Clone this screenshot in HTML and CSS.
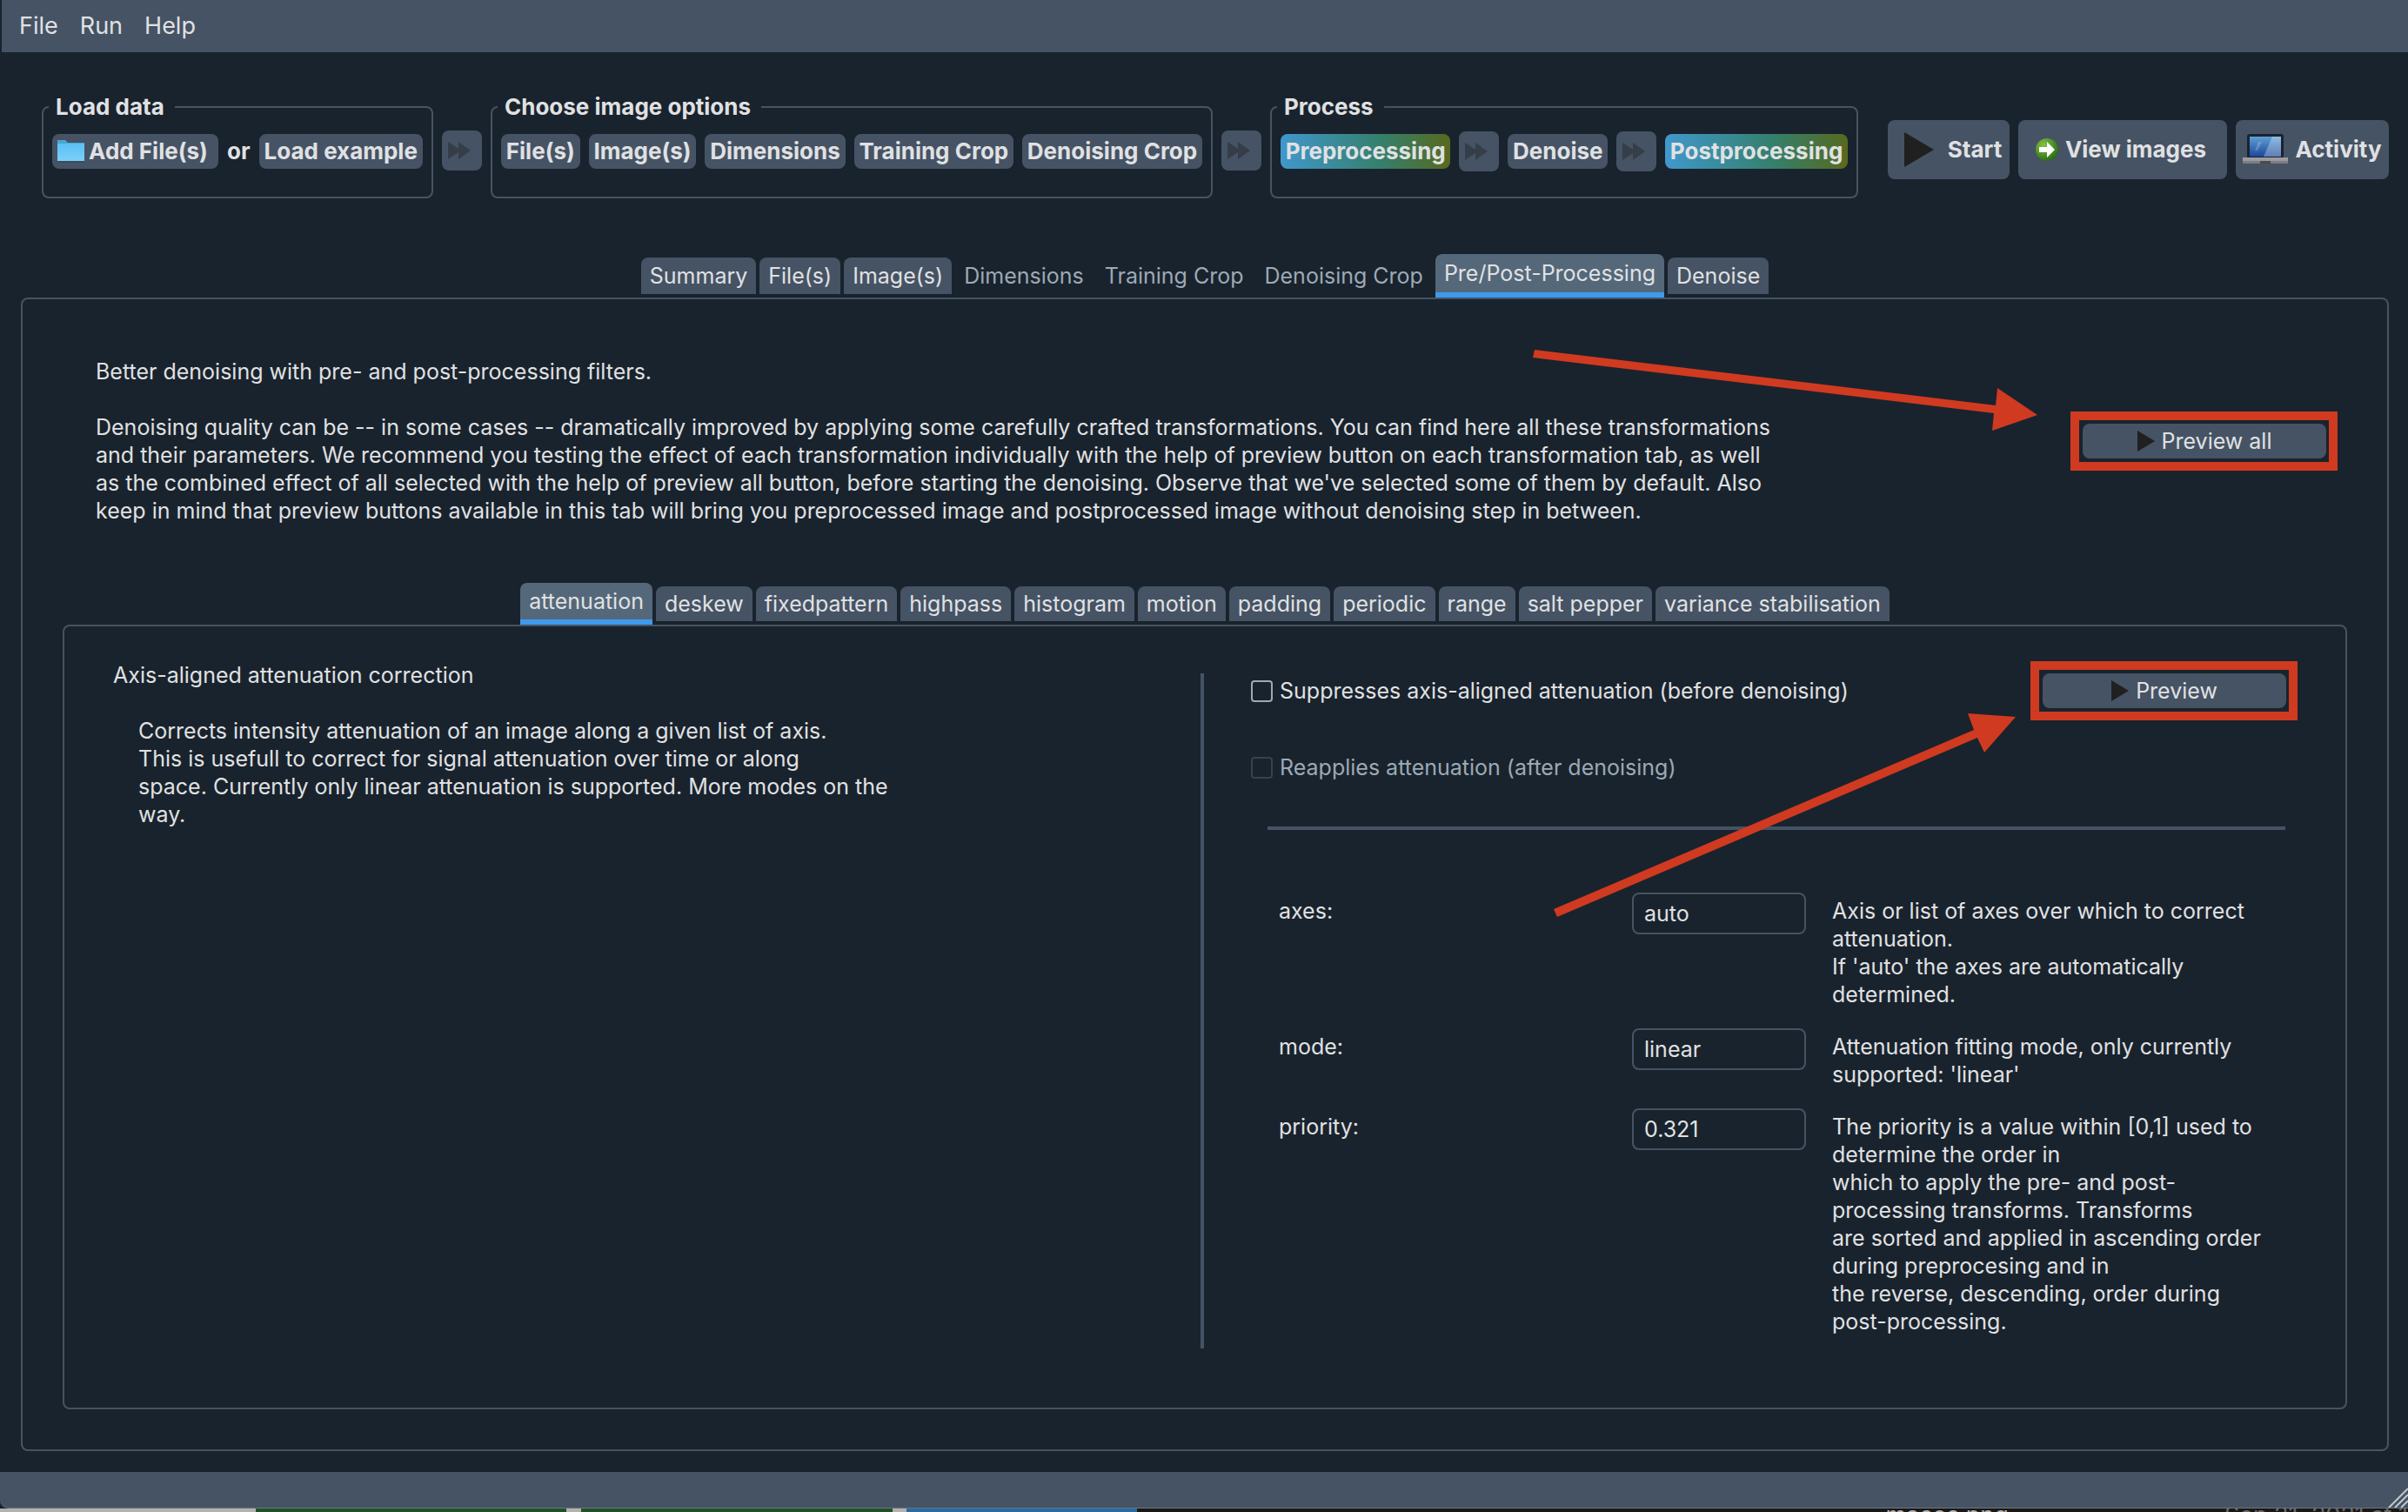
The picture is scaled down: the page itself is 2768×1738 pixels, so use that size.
FILE: index.html
```
<!DOCTYPE html>
<html lang="en">
<head>
<meta charset="utf-8">
<title>Image denoising</title>
<link rel="stylesheet" href="styles.css">
</head>
<body>
<svg class="defs" aria-hidden="true">
  <defs>
    <linearGradient id="folder" x1="0" y1="0" x2="0" y2="1"><stop offset="0" stop-color="#5bc0f5"/><stop offset="1" stop-color="#7ccff8"/></linearGradient>
    <linearGradient id="screen" x1="0" y1="0" x2="0" y2="1"><stop offset="0" stop-color="#5f9fd6"/><stop offset="1" stop-color="#1c4799"/></linearGradient>
    <radialGradient id="ball" cx=".35" cy=".3" r=".8"><stop offset="0" stop-color="#86c440"/><stop offset="1" stop-color="#1f6512"/></radialGradient>
    <symbol id="forward" viewBox="0 0 26 20"><path d="M0 0 12 8V0L26 10 12 20V12L0 20z" fill="#353d49"/></symbol>
    <symbol id="play" viewBox="0 0 20 24"><path d="M0 0 20 12 0 24z" fill="#202020"/></symbol>
  </defs>
</svg>
<nav class="menubar">
  <a href="#">File</a><a href="#">Run</a><a href="#">Help</a>
</nav>
<main class="window">
  <div class="toolbar">
    <fieldset class="group">
      <legend>Load data</legend>
      <div class="steps">
        <button class="step add"><svg class="folder-icon" viewBox="0 0 32 26"><path d="M0 0h9l3 3h19v20H0z" fill="#4aa5d2"/><path d="M0 4h31v20H0z" fill="url(#folder)"/><path d="M0 24h31v2H0z" fill="#3d4a5b"/></svg>Add File(s)</button>
        <span class="or">or</span>
        <button class="step">Load example</button>
      </div>
    </fieldset>
    <button class="forward" aria-label="Next"><svg><use href="#forward"/></svg></button>
    <fieldset class="group">
      <legend>Choose image options</legend>
      <div class="steps">
        <button class="step">File(s)</button>
        <button class="step">Image(s)</button>
        <button class="step">Dimensions</button>
        <button class="step">Training Crop</button>
        <button class="step">Denoising Crop</button>
      </div>
    </fieldset>
    <button class="forward" aria-label="Next"><svg><use href="#forward"/></svg></button>
    <fieldset class="group">
      <legend>Process</legend>
      <div class="steps">
        <button class="step active">Preprocessing</button>
        <button class="forward" aria-label="Next"><svg><use href="#forward"/></svg></button>
        <button class="step">Denoise</button>
        <button class="forward" aria-label="Next"><svg><use href="#forward"/></svg></button>
        <button class="step active">Postprocessing</button>
      </div>
    </fieldset>
    <div class="actions">
      <button class="action start"><svg class="start-icon" viewBox="0 0 34 40"><path d="M0 0 34 20 0 40z" fill="#202020"/></svg>Start</button>
      <button class="action view"><svg class="view-icon" viewBox="0 0 26 28"><circle cx="13" cy="14" r="13" fill="url(#ball)"/><path d="M4 11h9V5l9 9-9 9v-6H4z" fill="#fff"/></svg>View images</button>
      <button class="action activity"><svg class="laptop-icon" viewBox="0 0 52 36"><rect x="5" y="0" width="42" height="28" rx="3" fill="#1a2330"/><path d="M8 3h36v23H8z" fill="url(#screen)"/><path d="M34 3h10v23H24z" fill="#fff" opacity=".3"/><path d="M18 9h4L17 19h-3z" fill="#fff" opacity=".2"/><path d="M0 27h52v7H0z" fill="#9a9c9f"/><path d="M0 31h52v3H0z" fill="#7c7e80"/><path d="M20 31h12v3H20z" fill="#4b4b4b"/></svg>Activity</button>
    </div>
  </div>

  <div class="tabs" role="tablist">
    <button class="tab" role="tab">Summary</button>
    <button class="tab" role="tab">File(s)</button>
    <button class="tab" role="tab">Image(s)</button>
    <button class="tab" role="tab" disabled>Dimensions</button>
    <button class="tab" role="tab" disabled>Training Crop</button>
    <button class="tab" role="tab" disabled>Denoising Crop</button>
    <button class="tab selected" role="tab" aria-selected="true">Pre/Post-Processing</button>
    <button class="tab" role="tab">Denoise</button>
  </div>
  <section class="pane">
    <div class="intro">
      <div class="copy">
        <p>Better denoising with pre- and post-processing filters.</p>
        <p>Denoising quality can be -- in some cases -- dramatically improved by applying some carefully crafted transformations. You can find here all these transformations<br>and their parameters. We recommend you testing the effect of each transformation individually with the help of preview button on each transformation tab, as well<br>as the combined effect of all selected with the help of preview all button, before starting the denoising. Observe that we've selected some of them by default. Also<br>keep in mind that preview buttons available in this tab will bring you preprocessed image and postprocessed image without denoising step in between.</p>
      </div>
      <div class="highlight"><button class="preview"><svg><use href="#play"/></svg>Preview all</button></div>
    </div>

    <div class="tabs inner" role="tablist">
      <button class="tab selected" role="tab" aria-selected="true">attenuation</button>
      <button class="tab" role="tab">deskew</button>
      <button class="tab" role="tab">fixedpattern</button>
      <button class="tab" role="tab">highpass</button>
      <button class="tab" role="tab">histogram</button>
      <button class="tab" role="tab">motion</button>
      <button class="tab" role="tab">padding</button>
      <button class="tab" role="tab">periodic</button>
      <button class="tab" role="tab">range</button>
      <button class="tab" role="tab">salt pepper</button>
      <button class="tab" role="tab">variance stabilisation</button>
    </div>
    <div class="filter">
      <div class="about">
        <p>Axis-aligned attenuation correction</p>
        <p class="detail">Corrects intensity attenuation of an image along a given list of axis.<br>This is usefull to correct for signal attenuation over time or along<br>space. Currently only linear attenuation is supported. More modes on the<br>way.</p>
      </div>
      <div class="divider"></div>
      <div class="settings">
        <div class="switches">
          <div class="checks">
            <label class="check"><input type="checkbox">Suppresses axis-aligned attenuation (before denoising)</label>
            <label class="check off"><input type="checkbox" disabled>Reapplies attenuation (after denoising)</label>
          </div>
          <div class="highlight"><button class="preview"><svg><use href="#play"/></svg>Preview</button></div>
        </div>
        <hr>
        <div class="params">
          <label for="axes">axes:</label>
          <input id="axes" type="text" value="auto">
          <p>Axis or list of axes over which to correct<br>attenuation.<br>If 'auto' the axes are automatically<br>determined.</p>
          <label for="mode">mode:</label>
          <input id="mode" type="text" value="linear">
          <p>Attenuation fitting mode, only currently<br>supported: 'linear'</p>
          <label for="priority">priority:</label>
          <input id="priority" type="text" value="0.321">
          <p>The priority is a value within [0,1] used to<br>determine the order in<br>which to apply the pre- and post-<br>processing transforms. Transforms<br>are sorted and applied in ascending order<br>during preprocesing and in<br>the reverse, descending, order during<br>post-processing.</p>
        </div>
      </div>
    </div>
  </section>
</main>
<footer class="statusbar"><svg class="grip" viewBox="0 0 24 24"><path d="M2 24 24 2M9 24 24 9M16 24 24 16" stroke="#c3c8ce" stroke-width="2"/></svg></footer>
<div class="desktop"><span class="file">macos.png</span><span class="date">Sep 21, 2021 at 1</span></div>
<svg class="arrows" viewBox="0 0 2768 1738" aria-hidden="true">
  <g fill="#d03a20">
    <path d="M1764 402 2294 466 2296 446 2342 477 2290 495 2292 475 1762 411z"/>
    <path d="M1786 1045 2269 839 2262 820 2317 824 2281 865 2273 848 1790 1054z"/>
  </g>
</svg>
</body>
</html>
```
FILE: styles.css
```
* { box-sizing: border-box; }

body {
  margin: 0;
  min-height: 100vh;
  display: flex;
  flex-direction: column;
  position: relative;
  background: #19232d;
  color: #e0e1e3;
  font: 25px/32px Inter, "Liberation Sans", sans-serif;
}

p { margin: 0; }

button, input {
  font: inherit;
  color: inherit;
}

button {
  display: flex;
  align-items: center;
  justify-content: center;
  padding: 0;
  border: 0;
  border-radius: 8px;
  background: #455364;
  white-space: nowrap;
}

.defs {
  position: absolute;
  width: 0;
  height: 0;
}

.menubar {
  display: flex;
  align-items: center;
  gap: 25px;
  height: 60px;
  padding-left: 20px;
  background: #455364;
  border-left: 2px solid #19232d;
  font-size: 27px;
}

.menubar a {
  color: inherit;
  text-decoration: none;
}

.window {
  flex: 1;
  display: flex;
  flex-direction: column;
  padding: 47px 22px 24px 24px;
}

.toolbar {
  display: grid;
  grid-template-columns: 450fr 46px 830fr 46px 676fr 600fr;
  gap: 10px;
  margin-left: 24px;
  font-size: 26px;
  font-weight: 700;
}

.group {
  min-width: 0;
  height: 121px;
  margin: 0;
  padding: 0 10px;
  border: 2px solid #455364;
  border-radius: 8px;
}

.group legend {
  margin-left: -4px;
  padding: 0 12px 0 8px;
}

.steps {
  display: flex;
  align-items: center;
  gap: 10px;
  height: 56px;
  padding-top: 14px;
}

.step {
  flex: 1 0 auto;
  height: 40px;
}

.step.active {
  background: linear-gradient(90deg, #4098cc, #357f6b 60%, #57691f);
}

.step.add {
  gap: 4px;
  padding-right: 6px;
}

.folder-icon {
  width: 32px;
  height: 26px;
}

.forward {
  flex: none;
  width: 46px;
  height: 46px;
}

.toolbar > .forward { margin-top: 43px; }

.forward svg {
  width: 26px;
  height: 20px;
  margin-right: 6px;
}

.actions {
  display: grid;
  grid-template-columns: 140fr 240fr 176fr;
  gap: 10px;
  margin: 31px 0 0 24px;
  height: 68px;
}

.start { gap: 16px; padding-left: 10px; }
.view { gap: 8px; padding-right: 4px; }
.activity { gap: 8px; }

.start-icon { width: 34px; height: 40px; }
.view-icon { width: 26px; height: 28px; }
.laptop-icon { width: 52px; height: 36px; }

.tabs {
  display: flex;
  justify-content: center;
  align-items: flex-end;
  gap: 4px;
  height: 50px;
  margin-top: 64px;
}

.tab {
  height: 42px;
  margin-bottom: 4px;
  padding: 0 10px;
  border-radius: 8px 8px 0 0;
}

.tab:disabled {
  background: none;
  color: #9da9b5;
}

.tab.selected {
  height: 50px;
  margin-bottom: 0;
  background: #54687a;
  border-bottom: 6px solid #3f9aec;
}

.pane, .filter {
  border: 2px solid #455364;
  border-radius: 8px;
}

.pane {
  flex: 1;
  display: flex;
  flex-direction: column;
  padding: 67px 46px 46px;
}

.intro {
  display: flex;
  justify-content: space-between;
  align-items: center;
  padding: 0 11px 0 38px;
}

.copy {
  display: grid;
  gap: 32px;
  white-space: nowrap;
}

.highlight {
  flex: none;
  width: 307px;
  height: 68px;
  padding: 4px;
  border: 10px solid #d03a20;
}

.preview {
  width: 280px;
  height: 40px;
  gap: 8px;
}

.preview svg {
  width: 20px;
  height: 24px;
}

.inner {
  height: 48px;
  margin-top: 67px;
}

.inner .tab { height: 40px; }
.inner .tab.selected { height: 48px; }

.filter {
  flex: 1;
  display: grid;
  grid-template-columns: 1306fr 4px 1312fr;
  padding: 40px 0 68px;
}

.about { padding-left: 56px; }

.divider {
  margin-top: 14px;
  background: #455364;
}

.detail { margin: 32px 0 0 29px; }

.settings { padding-left: 54px; }

.switches {
  display: flex;
  justify-content: space-between;
  align-items: flex-start;
  padding-right: 55px;
}

.checks {
  display: grid;
  gap: 56px;
  padding-top: 18px;
}

.check {
  display: flex;
  align-items: center;
  gap: 8px;
}

.check input {
  appearance: none;
  width: 25px;
  height: 25px;
  margin: 0;
  border: 2px solid #9da9b5;
  border-radius: 4px;
}

.check.off { color: #9da9b5; }
.check.off input { border-color: #37414f; }

hr {
  height: 4px;
  margin: 52px 69px 72px 19px;
  border: 0;
  background: #455364;
}

.params {
  display: grid;
  grid-template-columns: 376px 200px 1fr;
  column-gap: 30px;
  row-gap: 23px;
  padding-left: 32px;
  align-items: start;
}

.params label, .params p { padding-top: 5px; }

.params input {
  width: 100%;
  height: 48px;
  padding: 0 12px;
  border: 2px solid #455364;
  border-radius: 8px;
  background: #19232d;
}

.statusbar {
  display: flex;
  justify-content: flex-end;
  align-items: flex-end;
  height: 42px;
  background: #455364;
  border-bottom: 1px solid #6a7582;
  border-bottom-left-radius: 10px;
}

.grip {
  width: 24px;
  height: 24px;
}

.desktop {
  display: flex;
  justify-content: flex-end;
  gap: 248px;
  height: 4px;
  overflow: hidden;
  font-size: 27px;
  line-height: 16px;
  white-space: nowrap;
  background: linear-gradient(90deg, #b5b1ac 294px, #1f5129 294px 651px, #b5b1ac 651px 668px, #1f5129 668px 1026px, #b5b1ac 1026px 1042px, #2b6ca0 1042px 1307px, #1c1815 1307px);
}

.file { color: #b4b2b0; }
.date { color: #6c6a68; }

.arrows {
  position: absolute;
  left: 0;
  top: 0;
  width: 100%;
  pointer-events: none;
}
```
